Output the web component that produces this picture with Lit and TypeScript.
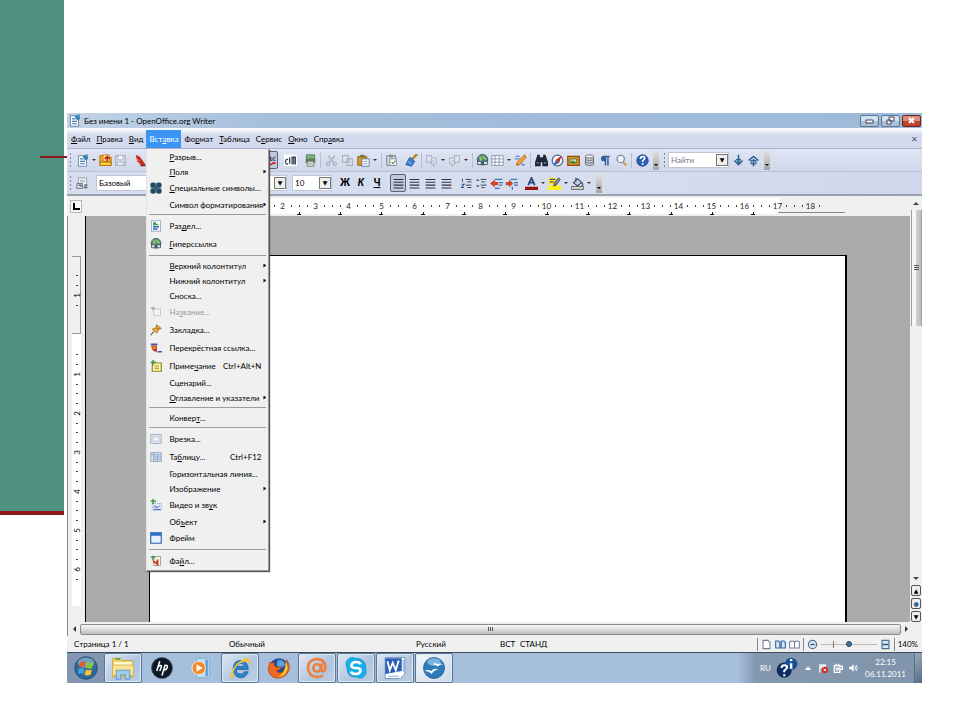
import { LitElement, html, css, svg, nothing, TemplateResult } from "lit";
import { customElement, state } from "lit/decorators.js";
import { classMap } from "lit/directives/class-map.js";

const SHAPES: Record<string, TemplateResult> = {
  doc: svg`<path d="M3 2h8l2 3v10H3z" fill="#fff" stroke="#56739b"/><path d="M5 6h4M5 9h6M5 12h6" stroke="#3b78b8" stroke-width="1.4"/><path d="M8 3l6-3 1 6-4 2z" fill="#3f86b8"/>`,
  folder: svg`<path d="M1 2h5l1 2h8v10H1z" fill="#f0a818" stroke="#a86a08"/><path d="M5 1h8v8H5z" fill="#ffe9a0" stroke="#b07810"/><path d="M10 9V4M7 6l3-3 3 3" stroke="#cc2010" stroke-width="2" fill="none"/><path d="M1 10h14v4H1z" fill="#ffd34a" stroke="#a86a08"/>`,
  save: svg`<path d="M2 2h12v12H2z" fill="#d5dae4" stroke="#9aa2b2"/><path d="M5 2h6v5H5z" fill="#fff" stroke="#a8afbc"/><path d="M4 10h8v4H4z" fill="#eceff5" stroke="#a8afbc"/>`,
  pdf: svg`<path d="M2 1l5 2 7 10-4 2-6-6z" fill="#c62c20"/><path d="M3 7l4 1" stroke="#fff" stroke-opacity=".55"/><path d="M8 13h6v2H8z" fill="#8a1c14"/>`,
  spell: svg`<path d="M2 8l2-5 2 5M3 6h2M8 3v5h2V5H8M14 4h-2v4h2" stroke="#40506a" fill="none" stroke-width="1.2"/><path d="M2 12q2-2 4 0t4 0t4 0" stroke="#d02020" fill="none" stroke-width="2"/>`,
  autospell: svg`<path d="M0 1h16v14H0z" fill="#fff"/><path d="M5 7a2 3 0 1 0 0 5M7 4v8M10 13V4h4v9M12 4v9" stroke="#3a4656" fill="none" stroke-width="1.6"/>`,
  print: svg`<path d="M3 1h10v5H3z" fill="#7cb47a" stroke="#4c7d4a"/><path d="M2 6h12v5H2z" fill="#667862"/><path d="M4 9h8v6H4z" fill="#e8efe4" stroke="#60705c"/><path d="M5 12h6" stroke="#58a050"/>`,
  cut: svg`<path d="M4 2l7 9M12 2L5 11" stroke="#a8afbc" stroke-width="1.7"/><circle cx="4" cy="12" r="2" fill="none" stroke="#a8afbc" stroke-width="1.5"/><circle cx="12" cy="12" r="2" fill="none" stroke="#a8afbc" stroke-width="1.5"/>`,
  copy: svg`<path d="M2 2h7v8H2zM7 6h7v8H7z" fill="#e2e6f0" stroke="#a8afbc" stroke-width="1.3"/><path d="M9 9h3M9 11h3" stroke="#a8afbc"/>`,
  paste: svg`<path d="M1 3h11v11H1z" fill="#d99a1c" stroke="#7d5a14"/><path d="M4 1h5v3H4z" fill="#6d6a60"/><path d="M6 6h9v9H6z" fill="#fff" stroke="#4a6a9a"/><path d="M8 9h5M8 12h5" stroke="#5c86ba"/>`,
  clip: svg`<path d="M2 2h11v12H2z" fill="#cdd3d8" stroke="#6c7884"/><path d="M5 1h5v3H5z" fill="#8a8a78"/><path d="M6 6h8v8H6z" fill="#fff" stroke="#6f8496"/><path d="M8 10l2 2 3-4" stroke="#3d9a3a" fill="none" stroke-width="1.4"/>`,
  brush: svg`<path d="M15 0l-6 6" stroke="#b08434" stroke-width="3"/><path d="M6 4l6 5-4 6-7-2z" fill="#3f7fd0" stroke="#1e4f93"/><path d="M4 9l4 4" stroke="#bfe0ff"/>`,
  undo: svg`<path d="M2 2h6v8H2zM8 5h6v7h-3v3l-4-4 4-3" fill="#dfe3ee" stroke="#b0b6c4" stroke-width="1.3"/>`,
  redo: svg`<path d="M8 2h6v8H8zM8 5H2v7h3v3l4-4-4-3" fill="#dfe3ee" stroke="#b0b6c4" stroke-width="1.3"/>`,
  globe: svg`<circle cx="8" cy="7" r="6.500" fill="#5a7f86" stroke="#2e4a56"/><path d="M4 3q4 3 1 5M9 2q0 4 4 4" stroke="#8fd05a" stroke-width="2.400" fill="none"/><path d="M2 9h5v4H2zM9 9h5v4H9z" fill="#dfe8ea" stroke="#2e4a56"/><path d="M6 11h4" stroke="#2e4a56" stroke-width="1.5"/>`,
  table: svg`<path d="M1 2h14v12H1z" fill="#fff" stroke="#7c8ca6"/><path d="M1 6h14M1 10h14M5 2v12M10 2v12" stroke="#7c8ca6"/>`,
  tablerow: svg`<path d="M1 2h14v12H1z" fill="#dbe4f2" stroke="#8296b4"/><path d="M1 5h14M5 8h10M5 11h10M5 2v12M10 5v9" stroke="#8296b4"/>`,
  draw: svg`<path d="M13 1l2 3-8 9-4 1 1-4z" fill="#f3a23a" stroke="#a45e1a"/><path d="M1 6h6M2 3h5" stroke="#5b8fc8" stroke-width="1.6"/><path d="M8 11l6 2-3 2z" fill="#5b8fc8"/>`,
  find: svg`<path d="M3 1h3v3h4V1h3l3 9v5H9v-5H7v5H0v-5z" fill="#1d2736"/><path d="M2 11h3M11 11h3" stroke="#7f93ad" stroke-width="1.5"/>`,
  nav: svg`<circle cx="8" cy="8" r="6.500" fill="#fff" stroke="#5d6d88" stroke-width="1.6"/><path d="M13 2l-3 9-4-4z" fill="#c82818"/><path d="M3 14l3-7 4 4z" fill="#2f64b4"/>`,
  gallery: svg`<path d="M1 3h14v11H1z" fill="#e89a20" stroke="#8c4c10" stroke-width="1.6"/><path d="M4 6h8v5H4z" fill="#bfe0a8" stroke="#38683c"/><path d="M4 11l3-3 5 3z" fill="#2f7a3a"/>`,
  db: svg`<path d="M3 3v10q5 3 10 0V3z" fill="#c6cad0" stroke="#5c6470"/><ellipse cx="8" cy="3" rx="5" ry="2" fill="#eef0f3" stroke="#5c6470"/><path d="M3 7q5 3 10 0M3 10q5 3 10 0" fill="none" stroke="#5c6470"/>`,
  pilcrow: svg`<path d="M8 14V3h5M11 3v11" stroke="#2d5e98" stroke-width="1.8" fill="none"/><path d="M8 2H6a3 3 0 0 0 0 7h2z" fill="#2d5e98"/>`,
  zoom: svg`<circle cx="7" cy="6" r="4.5" fill="#eaf2fb" stroke="#6e7b92" stroke-width="1.4"/><path d="M10 10l4 4" stroke="#c59a34" stroke-width="2.5"/>`,
  help: svg`<circle cx="8" cy="8" r="7" fill="#2a5db4" stroke="#183f86"/><path d="M5.5 6q0-3 2.700-3t2.500 2.300q0 1.500-2.500 3v1.500" fill="none" stroke="#fff" stroke-width="2"/><circle cx="8.200" cy="12.300" r="1.200" fill="#fff"/>`,
  down: svg`<path d="M8 1v11M3 8l5 5 5-5" stroke="#2c6290" stroke-width="2" fill="none"/><path d="M5 7h6M8 9v3" stroke="#2c6290" stroke-width="2"/>`,
  up: svg`<path d="M8 15V6M2 8l6-5 6 5" stroke="#2c6290" stroke-width="2" fill="none"/><path d="M5 8h6v4H5z" stroke="#2c6290" fill="none" stroke-width="1.400"/>`,
  styles: svg`<path d="M3 1h10v11H3z" fill="#f4f5f8" stroke="#8a909c"/><path d="M5 4h6M5 6h6" stroke="#9aa0aa"/><path d="M1 8h7v6H1z" fill="#dfe2e8" stroke="#5c6470"/><path d="M3 10h3v2M10 10h4M10 13h4" stroke="#4c5460" fill="none" stroke-width="1.4"/>`,
  align: svg`<path d="M2 3h12M2 6.500h12M2 10h12M2 13.500h12" stroke="#2c3440" stroke-width="1.300"/>`,
  numbered: svg`<path d="M3 2v4M2 9h3l-3 4h3" stroke="#30609a" fill="none" stroke-width="1.3"/><path d="M7 3h7M9 6h5M7 10h7M9 13h5" stroke="#3a4656" stroke-width="1.2"/>`,
  bullets: svg`<path d="M2 4h3M2 11h3" stroke="#3f5a7a" stroke-width="2"/><path d="M7 3h7M8 6h4M7 10h7M8 13h4" stroke="#3a4656" stroke-width="1.2"/>`,
  outdent: svg`<path d="M0 8l6-5v3h4v4H6v3z" fill="#d0442c"/><path d="M6 3h9M11 7h5M11 10h4M6 14h6" stroke="#3f76b4" stroke-width="1.5"/>`,
  indent: svg`<path d="M10 8L5 3v3H1v4h4v3z" fill="#d0442c"/><path d="M7 3h8M11 7h5M11 10h5M9 12v4" stroke="#3f76b4" stroke-width="1.5"/>`,
  fontcolor: svg`<path d="M4 10L8 1l4 9M5 7h6" stroke="#274b7c" stroke-width="2.200" fill="none"/><path d="M0 12h16v4H0z" fill="#9c1212"/>`,
  highlight: svg`<path d="M0 10h16v6H0zM1 1h9v8H1z" fill="#ffee22"/><path d="M2 3h7M2 6h5" stroke="#4b5563" stroke-width="1.500"/><path d="M13 1l2 2-5 7-3 1 1-4z" fill="#8a90a0" stroke="#333"/>`,
  fill: svg`<path d="M3 7l5-5 5 5-5 4z" fill="#c6d6e6" stroke="#2c3b50" stroke-width="1.300"/><path d="M13 6q3 4 0 5M6 1v5" stroke="#2c5d96" fill="none" stroke-width="1.500"/><path d="M0 12h16v3H0z" fill="#fff" stroke="#222"/>`,
  symbols: svg`<path d="M1 1h14v14H1z" fill="#7f9dae"/><circle cx="4" cy="4" r="3.500" fill="#24495f"/><circle cx="12" cy="4" r="3.500" fill="#24495f"/><circle cx="4" cy="12" r="3.500" fill="#24495f"/><circle cx="12" cy="12" r="3.500" fill="#24495f"/><circle cx="8" cy="8" r="3" fill="#37607a"/>`,
  section: svg`<path d="M2 1h12v14H2z" fill="#fff" stroke="#7c9cc0"/><path d="M4 4h4M4 6h7" stroke="#3f9a4a" stroke-width="2"/><path d="M4 9h8M4 12h6" stroke="#2f64b4" stroke-width="2"/>`,
  caption: svg`<path d="M5 4h9v9H5z" fill="#f3f3f3" stroke="#bdbdbd"/><path d="M1 3h6M4 1v5" stroke="#b0b0b0" stroke-width="2"/>`,
  bookmark: svg`<path d="M9 1l6 5-4 1-2 5-6-5 5-2z" fill="#f2b830" stroke="#8c5a10"/><path d="M5 10l-4 5" stroke="#555" stroke-width="1.500"/><path d="M9 5l3 3" stroke="#c86818" stroke-width="2"/>`,
  xref: svg`<path d="M1 3h9" stroke="#2f64b4" stroke-width="2"/><path d="M2 5h7l-1 5-4 1z" fill="#e8842a" stroke="#b02818"/><path d="M9 8v6l-5-3z" fill="#c82818"/><path d="M10 13h6" stroke="#2f64b4" stroke-width="2"/>`,
  note: svg`<path d="M3 4h12v11H3z" fill="#fff6a0" stroke="#8c8420" stroke-width="1.500"/><path d="M6 8h6M6 11h6" stroke="#6c6420"/><path d="M1 3h7M4 0v7" stroke="#3f9a4a" stroke-width="2"/>`,
  frame: svg`<path d="M1 2h14v12H1z" fill="#dfe5ee" stroke="#98a4b6"/><path d="M4 5h8v6H4z" fill="#f4f6fa" stroke="#b6bfcc"/>`,
  movie: svg`<path d="M3 6h12v9H3z" fill="#e4ebf8" stroke="#8ca4cc" stroke-dasharray="2 1"/><path d="M5 12l2-3 2 3 4-3M5 14h9" stroke="#1f3f9a" fill="none"/><path d="M1 3h7M4 0v7" stroke="#3f9a4a" stroke-width="2"/>`,
  iframe: svg`<path d="M1 1h14v14H1z" fill="#e8f0fc" stroke="#2c5da8" stroke-width="1.500"/><path d="M1 1h14v4H1z" fill="#2f6fd0"/>`,
  file: svg`<path d="M5 2h9v12H5z" fill="#fff4e0" stroke="#8a8a8a"/><path d="M1 3h6M4 1v6" stroke="#3f9a4a" stroke-width="2"/><path d="M4 8l6 4M10 6v8" stroke="#c03a20" stroke-width="2.500"/>`,
  page: svg`<path d="M3 2h7l3 3v9H3z" fill="#fff" stroke="#6d7f9c" stroke-width="1.500"/>`,
  pages: svg`<path d="M1 3h4l2 2v8H1zM9 3h4l2 2v8H9z" fill="#dbe8fa" stroke="#2f5f9f" stroke-width="1.600"/>`,
  book: svg`<path d="M1 4q4-2 7 0q3-2 7 0v9H1zM8 4v9" fill="#fff" stroke="#6d7f9c" stroke-width="1.500"/>`,
  minus: svg`<circle cx="8" cy="8" r="6" fill="#dce9f6" stroke="#4f7396" stroke-width="1.800"/><path d="M5 8h6" stroke="#1f4e80" stroke-width="2"/>`,
  plus: svg`<path d="M3 2h10v12H3z" fill="#dce9f6" stroke="#4f7396" stroke-width="1.800"/><path d="M4 8h8" stroke="#1f4e80" stroke-width="2"/>`,
  start: svg`<circle cx="16" cy="16" r="15" fill="#2f6796" stroke="#1c4568"/><ellipse cx="16" cy="9" rx="11" ry="7" fill="#9cc4de" opacity=".6"/><path d="M8 9q4-3 7-1l-1 7q-4-2-8 0z" fill="#ea5a26"/><path d="M17 8q4 2 9 0l-2 8q-4 2-8 0z" fill="#8cc63e"/><path d="M6 17q4-2 8 0l-1 7q-4-2-8 0z" fill="#3fa2e0"/><path d="M16 18q4 2 8 0l-2 7q-4 2-8 0z" fill="#fbc62c"/>`,
  explorer: svg`<path d="M2 3h11l2 3h14v22H2z" fill="#f1cf6c" stroke="#c39b38"/><path d="M4 8h24v4H4z" fill="#fff6cc"/><path d="M6 4h6" stroke="#3aa050" stroke-width="2"/><path d="M2 12h28v14H2z" fill="#fae294" stroke="#d2ab4a"/><path d="M7 31V19h18v12h-6v-6h-6v6z" fill="#9ccdf0" stroke="#4c8ec4"/>`,
  hp: svg`<circle cx="16" cy="16" r="14" fill="#0c1824" stroke="#3d566c"/><path d="M13 7L9 20M11 14q5-3 4 1l-2 5M20 12l-4 14M19 13q5-2 4 2t-6 4" fill="none" stroke="#fff" stroke-width="2"/>`,
  wmp: svg`<path d="M10 3h17v26H10z" fill="#b9dcf4" stroke="#6fa7d0"/><path d="M22 5h3v22h-3z" fill="#5a97ca"/><circle cx="13" cy="16" r="9" fill="#f0892a" stroke="#fff"/><path d="M10 11l8 5-8 5z" fill="#fff"/>`,
  ie: svg`<path d="M27 18H11q0 6 6 6 3 0 5-3h5q-3 8-10 8-10-1-10-12T17 6q10 1 10 12zM12 14h10q-1-4-5-4t-5 4z" fill="#2b86d0" stroke="#1b5c9c"/><path d="M5 29Q0 24 12 10 24 0 29 4q2 2-2 8 1-6-3-5Q10 10 7 22q-1 5 3 5-3 3-5 2z" fill="#f4c032"/>`,
  firefox: svg`<circle cx="16" cy="16" r="13" fill="#244c94"/><path d="M14 6q8-3 10 6l-5 4-6-3z" fill="#5ca2dc"/><path d="M4 8q2 2 6 1-2 4 3 6 4 0 6-1-2 6-7 5 4 6 11 1 6-5 3-15 7 9 1 18-7 8-16 6Q1 26 2 15z" fill="#ec6c1c" stroke="#b93c10"/><path d="M25 7q5 8 0 16-5 6-12 5 11-2 12-21z" fill="#fbc62c"/>`,
  agent: svg`<circle cx="16" cy="16" r="5" fill="none" stroke="#ef7e38" stroke-width="3.500"/><path d="M22 10v9q3 4 5-2 1-12-11-13Q4 5 4 16q1 12 13 12 4 0 7-2" fill="none" stroke="#ef7e38" stroke-width="3.500"/>`,
  skype: svg`<path d="M4 6q5-6 11-3 14 0 14 13 2 10-5 13-4 1-7-1Q4 29 4 16 1 10 4 6z" fill="#17aeea" stroke="#0d8cc4"/><path d="M22 11q-1-3-6-3t-6 4 6 4 6 4-6 4-7-3" fill="none" stroke="#fff" stroke-width="3.500"/>`,
  word: svg`<path d="M3 2h26v22l-6 6H3z" fill="#fff" stroke="#5a7fc0"/><path d="M3 3h22v17L3 24z" fill="#2a5db4"/><path d="M6 7l3 12 4-10 4 10 4-13" fill="none" stroke="#fff" stroke-width="2.500"/><path d="M7 27h14M27 5v16" stroke="#8fb0e0" stroke-width="1.500"/>`,
  office: svg`<circle cx="16" cy="16" r="14" fill="#2e7ab8" stroke="#1c578c"/><ellipse cx="16" cy="8" rx="9" ry="5" fill="#79b6de"/><path d="M14 11q4-3 7 0 4-2 7 0-4 0-7 3-3-3-7-3zM3 20q5-3 9 0 5-5 10-2-6 0-9 6-4-4-10-4z" fill="#fff"/>`,
  info: svg`<circle cx="12" cy="19" r="11" fill="#0d2c60"/><circle cx="22" cy="10" r="9" fill="#174f96"/><path d="M22 9v8M22 3v3" stroke="#fff" stroke-width="3.500"/><path d="M8 16q0-4 4-4t4 3q0 2-4 5v2M12 25v3" fill="none" stroke="#fff" stroke-width="3"/>`,
  flag: svg`<path d="M3 1v14" stroke="#fff" stroke-width="2"/><path d="M4 2h9v7H4z" fill="#e6e9ee"/><circle cx="11" cy="11" r="5" fill="#d2281c"/><path d="M9 9l4 4M13 9l-4 4" stroke="#fff" stroke-width="1.500"/>`,
  battery: svg`<path d="M2 4h9v11H2zM5 1v3M9 1v3M11 5h4v5h-4" fill="none" stroke="#fff" stroke-width="2"/><path d="M4 8h6M4 11h6" stroke="#fff" stroke-width="2"/>`,
  sound: svg`<path d="M2 6h3l4-4v12l-4-4H2z" fill="#fff"/><path d="M11 5q2 3 0 6M13 3q4 5 0 10" stroke="#fff" fill="none" stroke-width="1.400"/>`,
  caretUp: svg`<path d="M3 11l5-6 5 6z" fill="#fff"/>`,
};

const icon = (name: string, big = false) => html`<svg class="icon" viewBox=${big ? "0 0 32 32" : "0 0 16 16"} aria-hidden="true">${SHAPES[name]}</svg>`;

/** Underlines the letter that follows "_". */
const mnemonic = (text: string) => {
  const i = text.indexOf("_");
  return i < 0 ? html`${text}` : html`${text.slice(0, i)}<u>${text[i + 1]}</u>${text.slice(i + 2)}`;
};

interface Entry { label: string; icon?: string; key?: string; sub?: boolean; off?: boolean; }

const INSERT: (Entry | null)[] = [
  { label: "_Разрыв..." },
  { label: "_Поля", sub: true },
  { label: "_Специальные символы...", icon: "symbols" },
  { label: "Символ форматирования", sub: true },
  null,
  { label: "Раз_дел...", icon: "section" },
  { label: "_Гиперссылка", icon: "globe" },
  null,
  { label: "_Верхний колонтитул", sub: true },
  { label: "Нижний колонтитул", sub: true },
  { label: "Сноска..." },
  { label: "На_звание...", icon: "caption", off: true },
  { label: "Закладка...", icon: "bookmark" },
  { label: "Перекрёстная ссылка...", icon: "xref" },
  { label: "Приме_чание", icon: "note", key: "Ctrl+Alt+N" },
  { label: "Сценарий..." },
  { label: "_Оглавление и указатели", sub: true },
  null,
  { label: "Конвер_т..." },
  null,
  { label: "Врезка...", icon: "frame" },
  { label: "Та_блицу...", icon: "tablerow", key: "Ctrl+F12" },
  { label: "Горизонтальная линия..." },
  { label: "Изображение", sub: true },
  { label: "Видео и зв_ук", icon: "movie" },
  { label: "Об_ъект", sub: true },
  { label: "Фрейм", icon: "iframe" },
  null,
  { label: "Фа_йл...", icon: "file" },
];

const BAR = ["_Файл", "_Правка", "_Вид", "Вст_авка", "Фо_рмат", "_Таблица", "С_ервис", "_Окно", "Спр_авка"];

const range = (a: number, b: number) => Array.from({ length: b - a + 1 }, (_, i) => a + i);

@customElement("app-root")
export class AppRoot extends LitElement {
  @state() private open = true;

  static styles = css`
    :host { display: block; font: 8px/12px "Lato", "Roboto", sans-serif; color: #000; }
    * { box-sizing: border-box; }
    button, input, select { font: inherit; color: inherit; border: 0; padding: 0; margin: 0; background: none; border-radius: 0; outline: 0; }
    .icon { width: 13px; height: 13px; display: block; flex: none; }
    .slide { position: relative; display: flex; align-items: flex-start; gap: 3px; min-height: 100vh; background: #fff; overflow: hidden; }
    .band { flex: none; width: 64px; height: 515px; background: #4f917e; border-bottom: 4px solid #8c1a1a; }
    .rule { position: absolute; left: 40px; top: 156px; width: 27px; height: 2px; background: #8c1a1a; }
    .window { flex: 1; min-width: 0; height: calc(100vh - 150px); min-height: 500px; margin: 113px 38px 0 0; display: flex; flex-direction: column; background: #d3daed; }

    .title { height: 15px; flex: none; display: flex; align-items: center; gap: 3px; padding-left: 1px; background: linear-gradient(90deg, #c3d3e6, #a4bedb 25%, #9dbada); }
    .title h1 { flex: 1; margin: 0; font: inherit; white-space: nowrap; }
    .controls { display: flex; gap: 2px; padding-right: 1px; }
    .controls button { width: 19px; height: 12px; border: 1px solid #5f7690; border-radius: 2px; background: linear-gradient(#d3e0ee 45%, #a9c0d9 50%); display: grid; place-items: center; }
    .controls .close { background: linear-gradient(#dc8c7c 45%, #c0402a 50%); border-color: #6c2820; }
    .controls svg { width: 9px; height: 9px; display: block; }

    .menubar { height: 21px; flex: none; display: flex; align-items: stretch; padding: 2px 4px 0 1px; background: linear-gradient(#fff, #e4e9f5 4px, #d3daed 7px); border-bottom: 1px solid #aab3c8; }
    .holder { position: relative; display: flex; }
    .menubar .top { padding: 0 3px; white-space: nowrap; }
    .menubar .active { background: #3a95f5; color: #fff; }
    .docclose { margin-left: auto; width: 8px; color: #505868; }

    .menu { position: absolute; z-index: 5; left: 0; top: 19px; width: 123px; padding: 0 1px; background: #f0f0f0; border: 1px solid #9a9a9a; border-left-color: #e4e4e4; border-top: 0; box-shadow: 1px 1px 1px #555; }
    .entry { width: 100%; height: 15px; display: grid; grid-template-columns: 21px 1fr auto 6px; align-items: center; text-align: left; white-space: nowrap; }
    .entry.tall { height: 18px; }
    .entry .icon { width: 12px; height: 12px; margin-left: 2px; }
    .entry.off { color: #999; }
    .entry .label { overflow: visible; width: 0; }
    .entry .arrow { display: block; width: 3px; height: 4px; margin-left: 2px; background: #111; clip-path: polygon(0 0, 100% 50%, 0 100%); }
    .line { height: 1px; margin: 2px 1px; border: 0; background: #9c9c9c; }

    .tools { height: 23px; flex: none; display: flex; align-items: center; background: linear-gradient(#dfe5f4, #d0d7ea); border-bottom: 1px solid #b9c1d4; }
    .tools.last { height: 24px; border-bottom: 2px solid #9aa0ac; background: linear-gradient(90deg, #d6ddef 62%, #d0d7eb); }
    .grip { flex: none; width: 7px; height: 17px; display: grid; place-items: center; }
    .grip::after { content: ""; width: 1px; height: 15px; background: repeating-linear-gradient(#7f8aa4 0 2px, transparent 2px 4px); }
    .tool { flex: none; width: 15px; height: 18px; display: grid; place-items: center; font: bold 10px/12px "Roboto", sans-serif; }
    .tool.wide { width: 16px; }
    .tool.on { border: 1px solid #5c6272; border-radius: 2px; background: #c2c9dc; }
    .tool.italic { font-style: italic; }
    .tool.under { text-decoration: underline; }
    .caret { flex: none; width: 8px; display: grid; place-items: center; }
    .caret::after { content: ""; border: 2px solid transparent; border-top-color: #333; border-bottom: 0; }
    .sep { flex: none; width: 5px; height: 16px; display: grid; place-items: center; }
    .sep::after { content: ""; width: 1px; height: 15px; background: #b7bed0; }
    .gap { flex: none; width: 5px; }
    .covered { flex: none; width: 115px; }
    .more { flex: none; width: 6px; height: 20px; margin: 0 2px 0 3px; background: linear-gradient(#e4e4e4, #a4a4a4); display: grid; place-items: end center; padding-bottom: 4px; }
    .more::after { content: ""; border: 2px solid transparent; border-top-color: #000; border-bottom: 0; }
    .combo { position: relative; flex: none; display: flex; height: 16px; background: #fff; border: 1px solid #c0c6d4; }
    .combo select, .combo input { width: 100%; appearance: none; padding: 0 2px; background: transparent; }
    .combo::after { content: "▼"; position: absolute; right: 0; top: 1px; bottom: 1px; width: 10px; border: 1px solid #777; background: #eee; font: 6px/10px "DejaVu Sans", sans-serif; text-align: center; color: #000; pointer-events: none; }
    .combo.style { width: 88px; margin-left: 6px; }
    .combo.face { width: 96px; margin-left: 7px; }
    .combo.size { width: 40px; margin: 0 5px; }
    .combo.search { width: 61px; margin-right: 2px; }
    .combo input::placeholder { color: #777; opacity: 1; }

    .hruler { height: 20px; flex: none; display: flex; background: #f0f0f0; }
    .corner { flex: none; width: 12px; height: 13px; margin: 4px 180px 0 3px; border: 1px solid #b8b8b8; background: #fafafa; display: grid; place-items: center; }
    .corner::after { content: ""; width: 5px; height: 5px; border: solid #000; border-width: 0 0 2px 2px; }
    .scale { position: relative; flex: none; width: 583px; height: 16px; margin-top: 2px; background: linear-gradient(90deg, #fff 518px, #f0f0f0 518px); display: flex; }
    .cell { flex: none; width: 33px; display: grid; grid-template-columns: 8px 8px 9px 8px; align-items: center; color: #301820; }
    .cell span { display: flex; justify-content: center; }
    .cell i { width: 1px; height: 2px; background: #444; justify-self: center; }
    .stops { position: absolute; left: 16px; bottom: -1px; width: 496px; display: flex; }
    .stops i { flex: 1; display: grid; place-items: end center; }
    .stops i::after { content: ""; width: 4px; height: 3px; background: linear-gradient(#111, #111) 2px 0 / 1px 3px no-repeat, linear-gradient(#111, #111) 0 2px / 4px 1px no-repeat; }
    .beyond { position: absolute; right: 0; bottom: 1px; width: 67px; height: 1px; background: #888; }

    .work { flex: 1; min-height: 0; display: flex; background: #f0f0f0; }
    .vruler { flex: none; width: 18px; padding: 40px 4px 0 4px; border-left: 1px solid #888; display: flex; flex-direction: column; overflow: hidden; }
    .vtop { height: 78px; flex: none; border: 1px solid #999; border-left: 0; display: flex; flex-direction: column; padding-top: 14px; }
    .vbody { height: 272px; flex: none; padding-top: 16px; background: #fff; }
    .vcell { height: 39px; display: grid; grid-template-rows: 9px 10px 10px 10px; justify-items: center; align-items: center; }
    .vcell b { font-weight: normal; writing-mode: vertical-rl; transform: rotate(180deg); line-height: 10px; }
    .vcell i { width: 2px; height: 1px; background: #444; }
    .canvas { flex: 1; min-width: 0; background: #ababab; border-left: 1px solid #000; padding: 39px 63px 0 63px; display: flex; }
    .paper { flex: 1; background: #fff; border: 1px solid #000; border-right-width: 2px; border-bottom: 0; }
    .vscroll { position: relative; flex: none; width: 12px; display: flex; flex-direction: column; align-items: center; margin-top: -18px; background: #f0f0f0; }
    .arr { flex: none; width: 0; height: 0; border: 3px solid transparent; }
    .arr.u { border-bottom-color: #444; border-top: 0; margin: 4px 0 5px; }
    .arr.d { border-top-color: #444; border-bottom: 0; margin: auto 0 5px; }
    .arr.l { border-right-color: #333; border-left: 0; }
    .arr.r { border-left-color: #333; border-right: 0; }
    .vthumb { flex: none; width: 11px; height: 116px; border: 1px solid #a0a0a0; border-width: 0 1px; background: linear-gradient(90deg, #f6f6f6 45%, #d0d0d0 50%, #bcbcbc); display: grid; place-items: center; }
    .vthumb::after { content: ""; width: 5px; height: 6px; background: repeating-linear-gradient(#555 0 1px, transparent 1px 2px); }
    .jump { display: grid; gap: 2px; }
    .jump button { width: 10px; height: 11px; border: 1px solid #555; border-radius: 2px; background: #eee; font: 6px/8px "DejaVu Sans", sans-serif; }
    .jump .ball { color: #2f6490; }

    .hscroll { flex: none; height: 14px; display: flex; align-items: center; gap: 4px; padding: 1px 14px 1px 5px; border-left: 1px solid #888; background: #f0f0f0; }
    .hthumb { flex: 1; height: 11px; border: 1px solid #8c8c8c; border-radius: 2px; background: linear-gradient(#f6f6f6, #dcdcdc 50%, #bdbdbd); display: grid; place-items: center; }
    .hthumb::after { content: ""; width: 5px; height: 4px; background: repeating-linear-gradient(90deg, #555 0 1px, transparent 1px 2px); }

    .status { flex: none; height: 17px; display: grid; grid-template-columns: 155px 187px 84px 20px 1fr auto; align-items: center; padding-left: 7px; background: #f0f0f0; border-bottom: 1px solid #3c4a5c; white-space: nowrap; }
    .view { display: flex; align-items: center; gap: 3px; padding-right: 4px; }
    .view button { display: flex; }
    .view .icon { width: 11px; height: 11px; }
    .view .bar { width: 1px; height: 13px; background: #888; }
    .view input { width: 56px; height: 10px; appearance: none; background: linear-gradient(#777, #777) 12px 50% / 1px 7px no-repeat, linear-gradient(#bbb, #bbb) center / 100% 1px no-repeat; }
    .view input::-webkit-slider-thumb { appearance: none; width: 6px; height: 6px; border-radius: 3px; background: #3c6f94; border: 1px solid #26465e; }

    .taskbar { flex: none; height: 30px; display: flex; background: #a6bfdc; }
    .taskbar .icon { width: 24px; height: 24px; }
    .start { width: 37px; background: #8296b3; display: grid; place-items: center; }
    .apps { width: 349px; display: flex; gap: 1px; }
    .app { flex: 1; display: grid; place-items: center; border: 1px solid transparent; }
    .app.run { border-color: #5d7694; border-radius: 2px; background: linear-gradient(135deg, #dce7f3, #b0c5de 60%, #bccfe4); box-shadow: inset 0 0 0 1px #dfe9f4; }
    .app.front { background: linear-gradient(135deg, #f2f6fa, #cbd9e8); }
    .tray { margin-left: auto; width: 184px; display: flex; align-items: center; gap: 5px; padding-left: 22px; color: #fff; background: linear-gradient(90deg, #a6bfdc, #8397ae 18px, #8094ab); }
    .tray .icon { width: 10px; height: 12px; }
    .tray .big .icon { width: 22px; height: 24px; }
    .tray time { margin-left: auto; text-align: center; line-height: 12px; }
    .peek { flex: none; width: 8px; height: 30px; margin-left: 3px; border-left: 1px solid #5a6e88; background: linear-gradient(135deg, #9cabbd, #546a84); }
  `;

  private tool(name: string, label: string, extra = "") {
    return html`<button class="tool ${extra}" title=${label} aria-label=${label}>${icon(name)}</button>`;
  }

  private entry(e: Entry | null) {
    if (!e) return html`<hr class="line">`;
    return html`<button role="menuitem" class=${classMap({ entry: true, tall: !!e.icon, off: !!e.off })} ?disabled=${e.off}>
      <span>${e.icon ? icon(e.icon) : nothing}</span><span class="label">${mnemonic(e.label)}</span><span>${e.key}</span>
      <span>${e.sub ? html`<span class="arrow"></span>` : nothing}</span></button>`;
  }

  private menubar() {
    return html`<nav class="menubar" role="menubar">
      ${BAR.map((t, i) => html`<div class="holder">
        <button class=${classMap({ top: true, active: i === 3 && this.open })} @click=${() => { if (i === 3) this.open = !this.open; }}>${mnemonic(t)}</button>
        ${i === 3 && this.open ? html`<div class="menu" role="menu">${INSERT.map((e) => this.entry(e))}</div>` : nothing}
      </div>`)}
      <button class="docclose" aria-label="Закрыть документ">✕</button>
    </nav>`;
  }

  private standardBar() {
    const caret = html`<span class="caret"></span>`;
    const sep = html`<span class="sep"></span>`;
    const gap = html`<span class="gap"></span>`;
    return html`<div class="tools"><span class="grip"></span>
      ${this.tool("doc", "Создать", "wide")}${caret}${this.tool("folder", "Открыть")}${this.tool("save", "Сохранить")}${gap}${this.tool("pdf", "Экспорт в PDF")}
      <span class="covered"></span>
      ${this.tool("spell", "Автопроверка", "on")}${gap}${this.tool("autospell", "Непечатаемые")}${gap}${this.tool("print", "Печать")}${sep}
      ${this.tool("cut", "Вырезать", "wide")}${this.tool("copy", "Копировать", "wide")}${this.tool("paste", "Вставить", "wide")}${caret}${sep}
      ${this.tool("clip", "Буфер")}${gap}${this.tool("brush", "Кисть")}${sep}${this.tool("undo", "Отменить")}${caret}${this.tool("redo", "Вернуть")}${caret}${sep}
      ${this.tool("globe", "Гиперссылка")}${this.tool("table", "Таблица")}${caret}${this.tool("draw", "Рисование")}${sep}
      ${this.tool("find", "Найти", "wide")}${this.tool("nav", "Навигатор", "wide")}${this.tool("gallery", "Галерея", "wide")}${this.tool("db", "Источники данных", "wide")}${this.tool("pilcrow", "Знаки", "wide")}${this.tool("zoom", "Масштаб", "wide")}${sep}
      ${this.tool("help", "Справка", "wide")}<span class="more"></span>
      <span class="grip"></span>
      <span class="combo search"><input aria-label="Найти" placeholder="Найти"></span>
      ${this.tool("down", "Вперёд")}${this.tool("up", "Назад")}<span class="more"></span>
    </div>`;
  }

  private formatBar() {
    const caret = html`<span class="caret"></span>`;
    const gap = html`<span class="gap"></span>`;
    return html`<div class="tools last"><span class="grip"></span>${this.tool("styles", "Стили", "wide")}
      <span class="combo style"><select aria-label="Стиль"><option>Базовый</option></select></span>
      <span class="combo face"><select aria-label="Шрифт"><option></option></select></span>
      <span class="combo size"><select aria-label="Кегль"><option>10</option></select></span>
      <button class="tool wide">Ж</button><button class="tool wide italic">К</button><button class="tool wide under">Ч</button>${gap}
      ${this.tool("align", "По левому краю", "wide on")}${this.tool("align", "По центру", "wide")}${this.tool("align", "По правому краю", "wide")}${this.tool("align", "По ширине", "wide")}${gap}
      ${this.tool("numbered", "Нумерация")}${this.tool("bullets", "Маркеры")}${this.tool("outdent", "Уменьшить отступ")}${this.tool("indent", "Увеличить отступ")}${gap}
      ${this.tool("fontcolor", "Цвет шрифта")}${caret}${this.tool("highlight", "Выделение")}${caret}${this.tool("fill", "Фон")}${caret}<span class="more"></span>
    </div>`;
  }

  private ruler() {
    return html`<div class="hruler"><span class="corner"></span>
      <div class="scale">${range(2, 18).map((n) => html`<div class="cell"><i></i><i></i><span>${n}</span><i></i></div>`)}
        <div class="stops">${range(1, 12).map(() => html`<i></i>`)}</div><div class="beyond"></div></div></div>`;
  }

  private work() {
    return html`<div class="work">
      <div class="vruler"><div class="vtop">${this.vcell(1)}</div><div class="vbody">${range(1, 6).map((n) => this.vcell(n))}</div></div>
      <div class="canvas"><div class="paper"></div></div>
      <div class="vscroll"><span class="arr u"></span><div class="vthumb"></div><span class="arr d"></span>
        <div class="jump"><button aria-label="Предыдущая">▲</button><button class="ball" aria-label="Навигация">●</button><button aria-label="Следующая">▼</button></div></div>
    </div>`;
  }

  private vcell(n: number) {
    return html`<div class="vcell"><i></i><i></i><b>${n}</b><i></i></div>`;
  }

  private status() {
    return html`<footer class="status">
      <span>Страница 1 / 1</span><span>Обычный</span><span>Русский</span><span>ВСТ</span><span>СТАНД</span>
      <div class="view"><span class="bar"></span>
        <button aria-label="Одна страница">${icon("page")}</button><button aria-label="Несколько страниц">${icon("pages")}</button><button aria-label="Книга">${icon("book")}</button>
        <span class="bar"></span><button aria-label="Уменьшить">${icon("minus")}</button>
        <input type="range" aria-label="Масштаб" min="0" max="100" value="50">
        <button aria-label="Увеличить">${icon("plus")}</button><span class="bar"></span><span>140%</span>
      </div></footer>`;
  }

  private taskbar() {
    const apps: [string, string, string][] = [
      ["explorer", "Проводник", "run"], ["hp", "HP", ""], ["wmp", "Проигрыватель", ""], ["ie", "Internet Explorer", "run"],
      ["firefox", "Firefox", ""], ["agent", "Агент", "run"], ["skype", "Skype", "run"], ["word", "Word", "run"], ["office", "OpenOffice", "run front"],
    ];
    return html`<div class="taskbar"><button class="start" aria-label="Пуск">${icon("start", true)}</button>
      <div class="apps">${apps.map(([i, label, cls]) => html`<button class="app ${cls}" aria-label=${label}>${icon(i, true)}</button>`)}</div>
      <div class="tray"><span>RU</span><span class="big">${icon("info", true)}</span>${icon("caretUp")}${icon("flag")}${icon("battery")}${icon("sound")}
        <time>22:15<br>06.11.2011</time><span class="peek"></span></div></div>`;
  }

  render() {
    return html`<main class="slide"><div class="band"></div><div class="rule"></div>
      <section class="window">
        <header class="title">${icon("doc")}<h1>Без имени 1 - OpenOffice.org Writer</h1>
          <div class="controls">
            <button aria-label="Свернуть"><svg viewBox="0 0 9 9"><path d="M1 4h7v3H1z" fill="#fff" stroke="#445"/></svg></button>
            <button aria-label="Восстановить"><svg viewBox="0 0 9 9"><path d="M3 1h5v4H3zM1 4h4v4H1z" fill="#fff" stroke="#445"/></svg></button>
            <button class="close" aria-label="Закрыть"><svg viewBox="0 0 9 9"><path d="M2 2l5 5M7 2L2 7" stroke="#fff" stroke-width="2"/></svg></button>
          </div></header>
        ${this.menubar()}${this.standardBar()}${this.formatBar()}${this.ruler()}${this.work()}
        <div class="hscroll"><span class="arr l"></span><div class="hthumb"></div><span class="arr r"></span></div>
        ${this.status()}${this.taskbar()}
      </section></main>`;
  }
}
